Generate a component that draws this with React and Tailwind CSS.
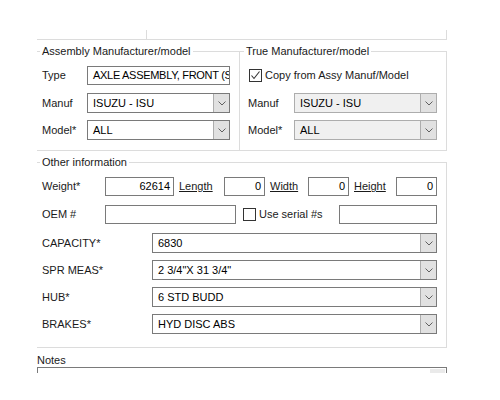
import React from 'react';

// small chevron used on every combobox button
const Chevron = () => (
  <svg width="8" height="5" viewBox="0 0 8 5" className="text-[#606060]">
    <polyline points="0.5,0.5 4,4 7.5,0.5" fill="none" stroke="currentColor" strokeWidth="1" />
  </svg>
);

const Combo = ({ value, width, disabled }) => (
  <div
    className={`flex h-[20px] border border-[#7a7a7a] ${disabled ? 'bg-[#f0f0f0] border-[#adadad]' : 'bg-white'}`}
    style={{ width }}
  >
    <div className="flex-1 flex items-center pl-[5px] overflow-hidden whitespace-nowrap text-black">{value}</div>
    <div className="w-[16px] flex items-center justify-center bg-[#e1e1e1] border-l border-[#adadad]">
      <Chevron />
    </div>
  </div>
);

const TextBox = ({ value, width, right, tight }) => (
  <div
    className={`flex items-center h-[19px] border border-[#7a7a7a] bg-white overflow-hidden whitespace-nowrap text-black ${right ? 'justify-end pr-[3px]' : 'pl-[5px]'} ${tight ? 'tracking-[-0.3px]' : ''}`}
    style={{ width }}
  >
    {value}
  </div>
);

const CheckBox = ({ checked }) => (
  <div className="w-[13px] h-[13px] border border-[#333] bg-white flex items-center justify-center">
    {checked && (
      <svg width="11" height="11" viewBox="0 0 11 11">
        <polyline points="1.5,5.5 4,8.5 9.5,1.5" fill="none" stroke="#333" strokeWidth="1.1" />
      </svg>
    )}
  </div>
);

const Legend = ({ children, className }) => (
  <legend className={`px-[2px] leading-[14px] text-[#1a1a1a] ${className || ''}`}>{children}</legend>
);

const App = () => {
  const specs = [
    { label: 'CAPACITY*', value: '6830' },
    { label: 'SPR MEAS*', value: '2 3/4"X 31 3/4"' },
    { label: 'HUB*', value: '6 STD BUDD' },
    { label: 'BRAKES*', value: 'HYD DISC ABS' },
  ];

  return (
    <div className="w-[500px] h-[400px] bg-white overflow-hidden font-['Liberation_Sans',Arial,sans-serif] text-[11px] text-[#1a1a1a]">
      <div className="ml-[37px] w-[410px]">
        {/* tail of the panel above */}
        <div className="mt-[30px] flex h-[10px] border-b border-[#dcdcdc]">
          <div className="w-[110px] border-r border-[#dcdcdc]" />
          <div className="flex-1 border-r border-[#dcdcdc]" />
        </div>

        {/* Manufacturer groups */}
        <div className="mt-[4px] flex">
          <fieldset className="w-[203px] m-0 p-0 border border-l-0 border-[#dcdcdc] min-w-0">
            <Legend className="ml-[3px]">Assembly Manufacturer/model</Legend>
            <div className="mt-[8px] pl-[5px] pb-[10px] flex flex-col gap-[8px]">
              <div className="flex items-center">
                <span className="w-[45px]">Type</span>
                <TextBox value="AXLE ASSEMBLY, FRONT (ST" width={143} tight />
              </div>
              <div className="flex items-center">
                <span className="w-[45px]">Manuf</span>
                <Combo value="ISUZU - ISU" width={143} />
              </div>
              <div className="flex items-center -mt-[1px]">
                <span className="w-[45px]">Model*</span>
                <Combo value="ALL" width={143} />
              </div>
            </div>
          </fieldset>
          <fieldset className="w-[207px] m-0 p-0 border border-l-0 border-[#dcdcdc] min-w-0">
            <Legend className="ml-[4px]">True Manufacturer/model</Legend>
            <div className="mt-[8px] pl-[8px] pb-[10px] flex flex-col gap-[8px]">
              <div className="flex items-center h-[19px] gap-[3px] pl-[1px]">
                <CheckBox checked />
                <span>Copy from Assy Manuf/Model</span>
              </div>
              <div className="flex items-center">
                <span className="w-[46px]">Manuf</span>
                <Combo value="ISUZU - ISU" width={143} disabled />
              </div>
              <div className="flex items-center -mt-[1px]">
                <span className="w-[46px]">Model*</span>
                <Combo value="ALL" width={143} disabled />
              </div>
            </div>
          </fieldset>
        </div>

        {/* Other information */}
        <fieldset className="mt-[4px] m-0 p-0 border border-l-0 border-[#dcdcdc] min-w-0">
          <Legend className="ml-[3px]">Other information</Legend>
          <div className="mt-[8px] pl-[5px] pb-[13px] flex flex-col">
            <div className="flex items-center">
              <span className="w-[63px]">Weight*</span>
              <TextBox value="62614" width={69} right />
              <span className="w-[50px] pl-[5px] underline">Length</span>
              <TextBox value="0" width={41} right />
              <span className="w-[43px] pl-[5px] underline">Width</span>
              <TextBox value="0" width={41} right />
              <span className="w-[47px] pl-[5px] underline">Height</span>
              <TextBox value="0" width={41} right />
            </div>
            <div className="mt-[9px] flex items-center">
              <span className="w-[63px]">OEM #</span>
              <TextBox value="" width={131} />
              <div className="ml-[7px] flex items-center gap-[3px] w-[96px]">
                <CheckBox />
                <span>Use serial #s</span>
              </div>
              <TextBox value="" width={98} />
            </div>
            <div className="mt-[9px] flex flex-col gap-[7px]">
              {specs.map((s) => (
                <div key={s.label} className="flex items-center">
                  <span className="w-[110px]">{s.label}</span>
                  <Combo value={s.value} width={285} />
                </div>
              ))}
            </div>
          </div>
        </fieldset>

        {/* Notes */}
        <div className="mt-[5px] leading-[14px]">Notes</div>
        <div className="h-[6px] border border-b-0 border-[#7a7a7a] flex justify-end pt-[1px] pr-[1px]">
          <div className="w-[15px] h-[4px] bg-[#eaeaea]" />
        </div>
      </div>
    </div>
  );
};

export default App;
